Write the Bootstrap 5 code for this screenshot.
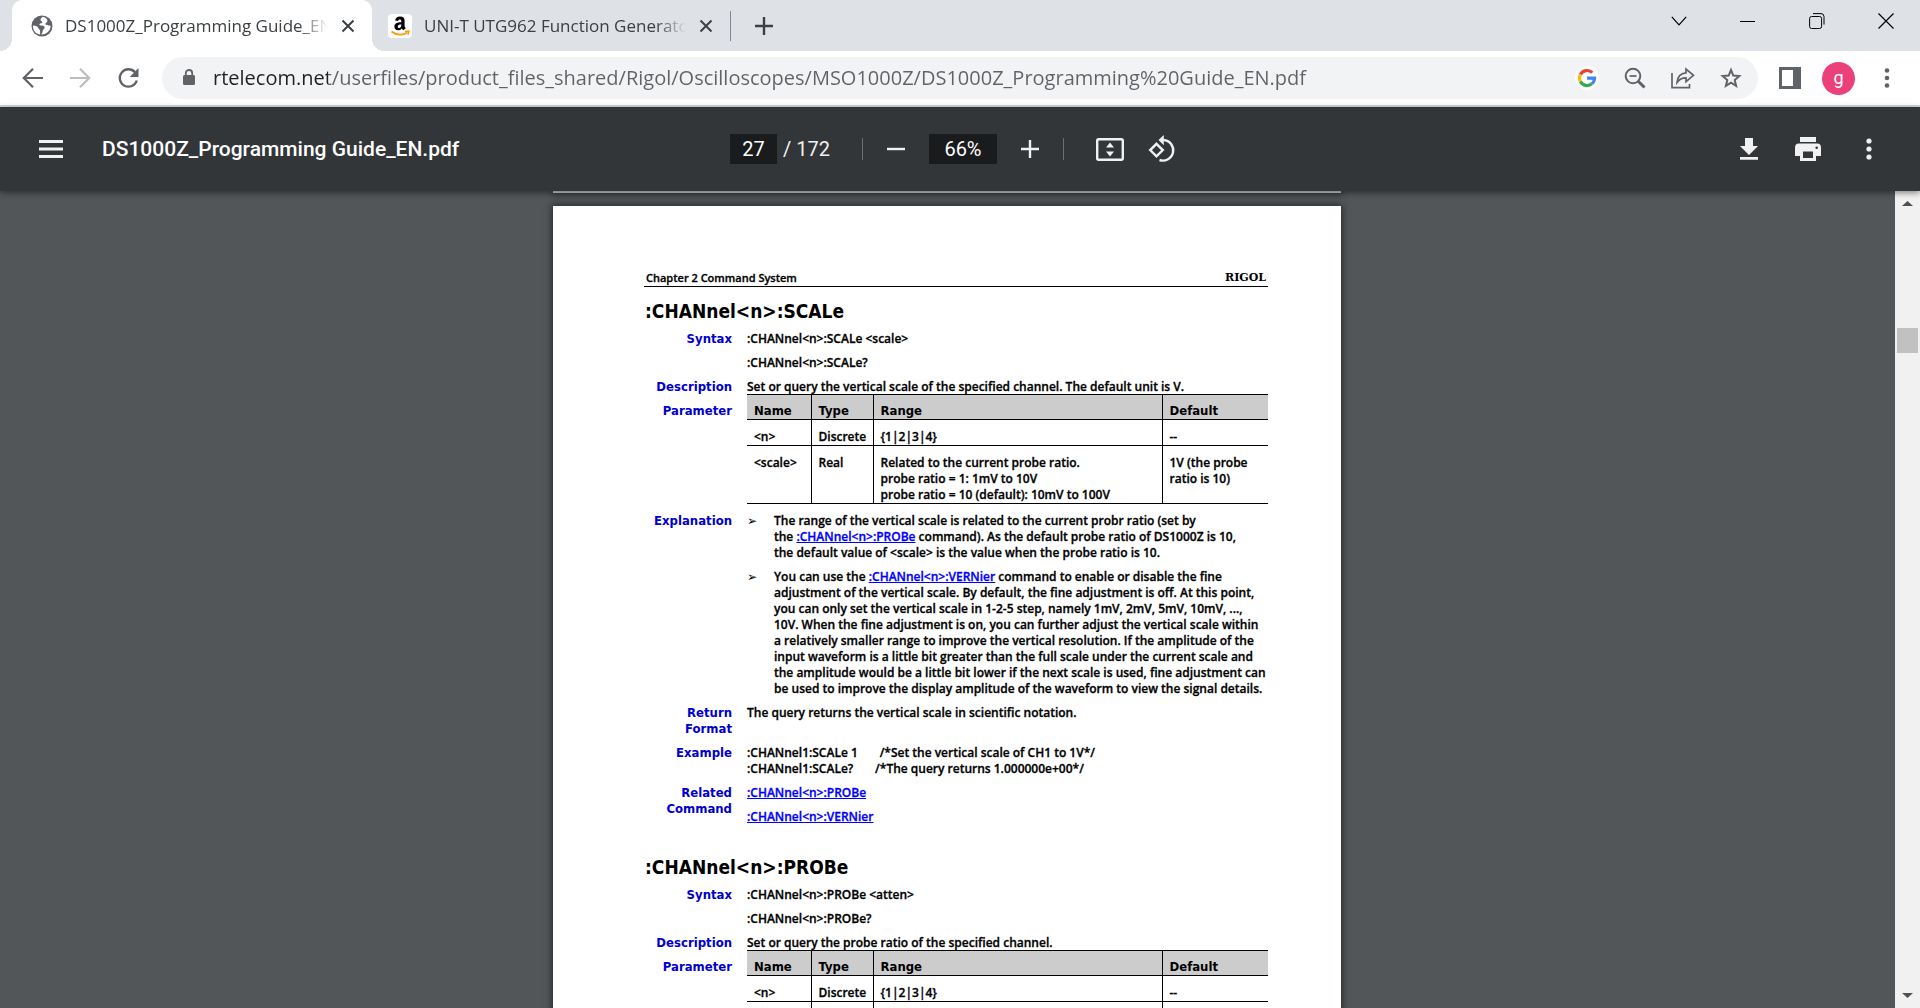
<!DOCTYPE html>
<html lang="en">
<head>
<meta charset="utf-8">
<meta name="viewport" content="width=device-width, initial-scale=1">
<title>DS1000Z_Programming Guide_EN.pdf</title>
<link href="https://cdn.jsdelivr.net/npm/bootstrap@5.3.0/dist/css/bootstrap.min.css" rel="stylesheet">
<style>
  body { height: 100vh; overflow: hidden; font-family: "Open Sans", "Noto Sans", sans-serif; background: #525659; }
  button { border: 0; background: transparent; padding: 0; color: inherit; }
  svg { display: block; flex: none; }

  /* browser chrome */
  .tabstrip { height: 51px; background: #dee1e6; padding-left: 12px; color: #3c4043; }
  .tab-item { position: relative; height: 51px; font-size: 17px; line-height: 24px; }
  .tab-active { width: 360px; background: #fff; border-radius: 10px 10px 0 0; padding: 0 16px 0 19px; }
  .tab-active::before, .tab-active::after { content: ""; position: absolute; bottom: 0; width: 12px; height: 12px; }
  .tab-active::before { left: -12px; background: radial-gradient(circle at 0 0, transparent 12px, #fff 12px); }
  .tab-active::after { right: -12px; background: radial-gradient(circle at 100% 0, transparent 12px, #fff 12px); }
  .tab-idle { width: 359px; padding: 0 16px; border-right: 1px solid #80868b; height: 30px; margin-top: 11px; }
  .tab-label { flex: 1; overflow: hidden; white-space: nowrap; margin: 0 12px; -webkit-mask-image: linear-gradient(90deg, #000 calc(100% - 30px), transparent); mask-image: linear-gradient(90deg, #000 calc(100% - 30px), transparent); }
  .fav { width: 24px; height: 24px; }
  .win-btn { width: 69px; height: 42px; color: #000; }
  .navrow { height: 56px; background: #fff; border-bottom: 2px solid #d5d7da; color: #5f6368; padding: 0 22px 0 20px; }
  .navrow .nav-btn { width: 48px; }
  .nav-tail { display: flex; align-items: center; gap: 21px; margin-left: 21px; }
  .omnibox { height: 42px; border-radius: 21px; background: #f1f3f4; padding: 0 16px 0 19px; margin-left: -2px; }
  .omni-icons { display: flex; align-items: center; gap: 25px; }
  .url-text { flex: 1; min-width: 0; border: 0; outline: 0; padding: 0; margin-left: 16px; font-size: 20px; line-height: 28px; color: transparent; background: linear-gradient(90deg, #202124 115px, #5f6368 115px); -webkit-background-clip: text; background-clip: text; }
  .avatar { width: 33px; height: 33px; border-radius: 50%; background: #ec407a; color: #fff; font: 18px/30px Roboto, sans-serif; text-align: center; }

  /* viewer toolbar */
  .pdfbar { position: relative; z-index: 2; height: 84px; background: #323639; color: #f1f1f1; font: 20px/30px Roboto, sans-serif; box-shadow: 0 2px 6px rgba(0,0,0,.45); padding: 0 40px 0 39px; }
  .pdf-side { flex: 1 1 0; }
  .pdf-title { font-size: 21px; font-weight: 500; color: #fff; margin-left: 39px; }
  .pdf-mid { margin-right: 13px; }
  .pdf-input { height: 30px; border: 0; padding: 0; background: #191b1c; color: #fff; text-align: center; }
  .pdf-page { width: 47px; }
  .pdf-zoom { width: 68px; }
  .pdf-total { margin: 0 8px 0 6px; }
  .pdf-rule { width: 1px; height: 22px; background: #6c6f71; }
  .pdf-actions { gap: 37px; }

  /* document area */
  .canvas { padding-right: 1px; }
  .sheet { width: 788px; background: #fff; box-shadow: 0 0 7px 1px rgba(0,0,0,.55); }
  .sheet-prev { height: 2px; background: #ccc; }
  .sheet-main { margin-top: 13px; padding: 64px 73px 0 91px; }
  .doc { font: 600 12px/16px "Open Sans", "Noto Sans", sans-serif; color: #000; white-space: nowrap; -webkit-text-stroke: .3px; }
  .doc-head { border-bottom: 1px solid #000; padding: 0 2px; font-size: 11px; }
  .doc-brand { font: bold 11px/16px "DejaVu Serif", serif; -webkit-text-stroke: 0; }
  .doc h2 { font: bold 19px/24px "DejaVu Sans Condensed", "DejaVu Sans", sans-serif; -webkit-text-stroke: 0; margin: 12px 0 8px 1px; }
  .doc h2.next { margin-top: 22px; }
  .doc dl { display: grid; grid-template-columns: 88px 1fr; column-gap: 15px; margin: 0; }
  .doc dt { text-align: right; color: #0000cd; font: bold 13px/16px "DejaVu Sans Condensed", "DejaVu Sans", sans-serif; -webkit-text-stroke: 0; }
  .doc dd { margin: 0 0 8px; }
  .doc dd.tight { margin-bottom: 0; }
  .doc dd p { margin: 0 0 8px; }
  .doc dd p:last-child { margin: 0; }
  .doc a { color: #00f; }
  .doc .lab-param { padding-top: 8px; }
  .doc ul { list-style: none; margin: 0; padding: 0; }
  .doc li { position: relative; padding-left: 27px; margin-bottom: 8px; }
  .doc li:last-child { margin: 0; }
  .doc li::before { content: "➢"; position: absolute; left: 0; top: 0; font: 12px/16px "DejaVu Sans", sans-serif; -webkit-text-stroke: 0; }
  .ptable { width: 100%; table-layout: fixed; border-collapse: collapse; border-bottom: 1px solid #000; margin: -1px 0 9px; }
  .ptable th, .ptable td { border: 1px solid #000; border-bottom: 0; padding: 9px 0 0 7px; vertical-align: top; }
  .ptable th { background: #ccc; font: bold 13px/16px "DejaVu Sans Condensed", "DejaVu Sans", sans-serif; -webkit-text-stroke: 0; padding-top: 8px; }
  .ptable tr > :first-child { border-left: 0; }
  .ptable tr > :last-child { border-right: 0; }
  .doc dd.param { margin: 0; }

  .sbar { width: 25px; background: #f1f1f1; }
  .sbar button { height: 25px; width: 25px; color: #505050; }
  .sthumb { width: 21px; height: 25px; margin: 112px auto 0; background: #c1c1c1; }
</style>
<script src="https://cdn.jsdelivr.net/npm/bootstrap@5.3.0/dist/js/bootstrap.bundle.min.js"></script>
</head>
<body class="d-flex flex-column">

<header>
  <div class="tabstrip d-flex">
    <div class="tab-item tab-active d-flex align-items-center flex-shrink-0">
      <svg width="22" height="22" viewBox="0 0 22 22"><circle cx="11" cy="11" r="10.5" fill="#5f6368"/><path d="M11.5 1.7c-.3 1.3-2 1.300-2 3 0 1.500 1.700 1 1.700 2.500 0 1.300-2.800.7-2.800 2.400 0 1.500 3.900.5 5 2.200 1 1.700-.9 2.300-1.500 3.500-.5 1.200-.3 2.700-1.600 4.200 6-.2 9.500-4.600 9.300-9-1.600.7-2.400-.5-4-.5-1.500-.1-1.500-1.700-.3-2.400 1.500-.9 1.500-2.700 0-4.200-1.200-1-2.500-1.600-3.800-1.700zM2 10.500c2.400.2 4.700.5 5.200 2.300.4 1.600 1.900 1.400 1.900 3.200v3.600C4.500 19 1.700 15.300 2 10.500z" fill="#fff"/></svg>
      <span class="tab-label">DS1000Z_Programming Guide_EN.pdf</span>
      <button aria-label="Close tab"><svg width="16" height="16" viewBox="0 0 16 16"><path d="M2.500 2.500l11 11M13.500 2.500l-11 11" stroke="#3c4043" stroke-width="2"/></svg></button>
    </div>
    <div class="tab-item tab-idle d-flex align-items-center flex-shrink-0">
      <svg class="fav" viewBox="0 0 24 24"><rect width="24" height="24" rx="4" fill="#fff"/><path d="M13.300 8.300V7.200c0-1.200-.5-1.800-1.500-1.800-.9 0-1.500.5-1.700 1.500l-3-.3C7.500 4 9.300 2.600 12.200 2.600c2.800 0 4.400 1.400 4.400 4v5.200c0 1 .4 1.500 1.100 2.400l-2.300 2c-.7-.5-1.200-1.100-1.600-1.800-1 1.300-2.200 1.900-3.700 1.900-2.300 0-3.700-1.400-3.700-3.600 0-3.200 2.800-4.400 6.900-4.400zm0 2.100c-2.300 0-3.500.6-3.500 2.100 0 1 .5 1.500 1.300 1.500 1.300 0 2.200-1.100 2.200-3z" fill="#000"/><path d="M3.500 17.500c5 4 11.500 4 16 1" fill="none" stroke="#f90" stroke-width="1.800"/><path d="M17 17.300l4-.3-1 3.800" fill="none" stroke="#f90" stroke-width="1.300"/></svg>
      <span class="tab-label">UNI-T UTG962 Function Generator</span>
      <button aria-label="Close tab"><svg width="16" height="16" viewBox="0 0 16 16"><path d="M2.500 2.500l11 11M13.500 2.500l-11 11" stroke="#3c4043" stroke-width="2"/></svg></button>
    </div>
    <button class="ms-4 align-self-center" aria-label="New tab"><svg width="18" height="18" viewBox="0 0 18 18"><path d="M9 0v18M0 9h18" stroke="#3c4043" stroke-width="2.400"/></svg></button>
    <div class="d-flex ms-auto">
      <button class="win-btn d-flex align-items-center justify-content-center" aria-label="Search tabs"><svg width="16" height="10" viewBox="0 0 16 10"><path d="M.8.8L8 8.800 15.200.8" fill="none" stroke="currentColor" stroke-width="1.200"/></svg></button>
      <button class="win-btn d-flex align-items-center justify-content-center" aria-label="Minimize"><svg width="16" height="16"><path d="M0 8.500h15" stroke="currentColor"/></svg></button>
      <button class="win-btn d-flex align-items-center justify-content-center" aria-label="Restore"><svg width="16" height="16" viewBox="0 0 16 16" fill="none" stroke="currentColor"><rect x=".6" y="3.500" width="12" height="12" rx="2"/><path d="M4 .6h8a3 3 0 0 1 3 3v8"/></svg></button>
      <button class="win-btn d-flex align-items-center justify-content-center" aria-label="Close"><svg width="16" height="16" viewBox="0 0 16 16"><path d="M.5.5l15 15M15.500.5l-15 15" stroke="currentColor" stroke-width="1.200"/></svg></button>
    </div>
  </div>

  <nav class="navrow d-flex align-items-center" aria-label="Browser">
    <button class="nav-btn" aria-label="Back"><svg width="25" height="24" viewBox="0 0 25 24" fill="none" stroke="#5f6368" stroke-width="2.200"><path d="M23 12H4.500M13 2.800L3.800 12l9.200 9.200"/></svg></button>
    <button class="nav-btn" aria-label="Forward"><svg width="25" height="24" viewBox="0 0 25 24" fill="none" stroke="#bbbdbf" stroke-width="2.200"><path d="M2 12h18.500M12 2.800l9.200 9.200-9.200 9.200"/></svg></button>
    <button class="nav-btn" aria-label="Reload"><svg width="25" height="24" viewBox="0 0 25 24" fill="none" stroke="#5f6368" stroke-width="2.300"><path d="M20.800 14.500A8.700 8.700 0 1 1 19 6.200"/><path d="M22.500 2v9h-8.800z" fill="#5f6368" stroke="none"/></svg></button>
    <div class="omnibox d-flex align-items-center flex-grow-1">
      <svg width="16" height="20" viewBox="0 0 16 20"><rect x="2" y="7" width="12" height="10" rx="1.500" fill="#5f6368"/><path d="M4.800 8V5.200a3.200 3.200 0 0 1 6.400 0V8" fill="none" stroke="#5f6368" stroke-width="1.800"/></svg>
      <input class="url-text" type="text" aria-label="Address" value="rtelecom.net/userfiles/product_files_shared/Rigol/Oscilloscopes/MSO1000Z/DS1000Z_Programming%20Guide_EN.pdf">
      <div class="omni-icons">
        <button aria-label="Google"><svg width="24" height="24" viewBox="-12 -12 24 24" fill="none" stroke-width="3.200"><circle r="12" fill="#fff" stroke="none"/><path d="M-6.600-3.500A7.500 7.500 0 0 1 5.300-5.300" stroke="#ea4335"/><path d="M-6.600 3.500A7.500 7.500 0 0 1-6.600-3.500" stroke="#fbbc05"/><path d="M4.800 5.800A7.500 7.500 0 0 1-6.600 3.500" stroke="#34a853"/><path d="M0 .2h7.500A7.500 7.500 0 0 1 4.800 5.800" stroke="#4285f4"/></svg></button>
        <button aria-label="Zoom"><svg width="22" height="22" viewBox="0 0 22 22" fill="none" stroke="#5f6368"><circle cx="9" cy="9" r="7.300" stroke-width="2"/><path d="M14 14l6.500 6.500" stroke-width="3"/><path d="M5.500 9h7" stroke-width="1.700"/></svg></button>
        <button aria-label="Share"><svg width="24" height="22" viewBox="0 0 24 22" fill="none" stroke="#5f6368" stroke-width="1.700"><path d="M1 6v14.700h17.500V17"/><path d="M6 15.500C6.500 9.500 9.500 6.300 15 5.800V2l7.500 6.300-7.500 6.300v-3.800c-4-.1-6.500 1.200-9 4.700z"/></svg></button>
        <button aria-label="Bookmark"><svg width="22" height="22" viewBox="0 0 22 22" fill="none" stroke="#5f6368" stroke-width="2"><path d="M11 3l2.300 5.600 6 .5-4.600 3.900 1.400 5.900-5.100-3.200-5.100 3.200 1.400-5.900L2.700 9.100l6-.5z"/></svg></button>
      </div>
    </div>
    <div class="nav-tail">
      <button aria-label="Side panel"><svg width="22" height="22" viewBox="0 0 22 22"><path d="M0 0h22v22H0zM3 3v16h11V3z" fill="#5f6368" fill-rule="evenodd"/></svg></button>
      <button class="avatar" aria-label="Profile">g</button>
      <button aria-label="Menu"><svg width="22" height="22" viewBox="0 0 22 22" fill="#5f6368"><circle cx="11" cy="3.500" r="2.300"/><circle cx="11" cy="11" r="2.300"/><circle cx="11" cy="18.500" r="2.300"/></svg></button>
    </div>
  </nav>
</header>

<div class="pdfbar d-flex align-items-center flex-shrink-0">
  <div class="pdf-side d-flex align-items-center">
    <button aria-label="Menu"><svg width="24" height="18" viewBox="0 0 24 18"><path d="M0 1.500h24M0 9h24M0 16.500h24" stroke="#f1f1f1" stroke-width="3"/></svg></button>
    <span class="pdf-title">DS1000Z_Programming Guide_EN.pdf</span>
  </div>
  <div class="pdf-mid d-flex align-items-center">
    <input class="pdf-input pdf-page" type="text" value="27" aria-label="Page number">
    <span class="pdf-total">/ 172</span>
    <div class="pdf-rule mx-4"></div>
    <button aria-label="Zoom out"><svg width="18" height="18"><path d="M0 9h18" stroke="#f1f1f1" stroke-width="2.400"/></svg></button>
    <input class="pdf-input pdf-zoom mx-4" type="text" value="66%" aria-label="Zoom level">
    <button aria-label="Zoom in"><svg width="18" height="18"><path d="M0 9h18M9 0v18" stroke="#f1f1f1" stroke-width="2.400"/></svg></button>
    <div class="pdf-rule mx-4"></div>
    <button class="ms-2 me-4" aria-label="Fit to page"><svg width="28" height="23" viewBox="0 0 28 23"><rect x="1.200" y="1.200" width="25.600" height="20.600" rx="1.500" fill="none" stroke="#f1f1f1" stroke-width="2.400"/><path d="M14 4.500l4 5h-8zM14 18.500l-4-5h8z" fill="#f1f1f1"/></svg></button>
    <button aria-label="Rotate"><svg width="28" height="28" viewBox="0 0 28 28" fill="none" stroke="#f1f1f1" stroke-width="2.400"><path d="M8.500 8.800l6.300 6.300-6.300 6.300-6.300-6.300z"/><path d="M15.500 5a10.300 10.300 0 1 1-4 20"/><path d="M15.800 0v10.200L10.500 5z" fill="#f1f1f1" stroke="none"/></svg></button>
  </div>
  <div class="pdf-side pdf-actions d-flex align-items-center justify-content-end">
    <button aria-label="Download"><svg width="18" height="22" viewBox="0 0 18 22" fill="#f1f1f1"><path d="M5 0h8v8h5l-9 9-9-9h5zM0 19h18v2.800H0z"/></svg></button>
    <button aria-label="Print"><svg width="26" height="24" viewBox="0 0 26 24"><path d="M5 0h16v5H5zM4 6.500h18a4 4 0 0 1 4 4V19h-5v5H5v-5H0v-8.500a4 4 0 0 1 4-4zM8 14.500v6.500h10v-6.500z" fill="#f1f1f1" fill-rule="evenodd"/><circle cx="21.700" cy="10.700" r="1.300" fill="#323639"/></svg></button>
    <button aria-label="More actions"><svg width="22" height="22" viewBox="0 0 22 22" fill="#f1f1f1"><circle cx="11" cy="3" r="2.600"/><circle cx="11" cy="11" r="2.600"/><circle cx="11" cy="19" r="2.600"/></svg></button>
  </div>
</div>

<main class="d-flex flex-grow-1 overflow-hidden">
  <div class="canvas flex-grow-1 d-flex flex-column align-items-center overflow-hidden">
    <div class="sheet sheet-prev flex-shrink-0"></div>
    <article class="sheet sheet-main doc flex-shrink-0">
      <div class="doc-head d-flex justify-content-between"><span>Chapter 2 Command System</span><span class="doc-brand">RIGOL</span></div>

      <h2>:CHANnel&lt;n&gt;:SCALe</h2>
      <dl>
        <dt>Syntax</dt>
        <dd><p>:CHANnel&lt;n&gt;:SCALe &lt;scale&gt;</p><p>:CHANnel&lt;n&gt;:SCALe?</p></dd>
        <dt>Description</dt>
        <dd class="tight">Set or query the vertical scale of the specified channel. The default unit is V.</dd>
        <dt class="lab-param">Parameter</dt>
        <dd class="param">
          <table class="ptable">
            <colgroup><col style="width:64px"><col style="width:62px"><col style="width:289px"><col></colgroup>
            <thead><tr><th>Name</th><th>Type</th><th>Range</th><th>Default</th></tr></thead>
            <tbody>
              <tr><td>&lt;n&gt;</td><td>Discrete</td><td>{1|2|3|4}</td><td>--</td></tr>
              <tr><td>&lt;scale&gt;</td><td>Real</td><td>Related to the current probe ratio.<br>probe ratio = 1: 1mV to 10V<br>probe ratio = 10 (default): 10mV to 100V</td><td>1V (the probe<br>ratio is 10)</td></tr>
            </tbody>
          </table>
        </dd>
        <dt>Explanation</dt>
        <dd>
          <ul>
            <li>The range of the vertical scale is related to the current probr ratio (set by<br>the <a href="#probe">:CHANnel&lt;n&gt;:PROBe</a> command). As the default probe ratio of DS1000Z is 10,<br>the default value of &lt;scale&gt; is the value when the probe ratio is 10.</li>
            <li>You can use the <a href="#vernier">:CHANnel&lt;n&gt;:VERNier</a> command to enable or disable the fine<br>adjustment of the vertical scale. By default, the fine adjustment is off. At this point,<br>you can only set the vertical scale in 1-2-5 step, namely 1mV, 2mV, 5mV, 10mV, ...,<br>10V. When the fine adjustment is on, you can further adjust the vertical scale within<br>a relatively smaller range to improve the vertical resolution. If the amplitude of the<br>input waveform is a little bit greater than the full scale under the current scale and<br>the amplitude would be a little bit lower if the next scale is used, fine adjustment can<br>be used to improve the display amplitude of the waveform to view the signal details.</li>
          </ul>
        </dd>
        <dt>Return<br>Format</dt>
        <dd>The query returns the vertical scale in scientific notation.</dd>
        <dt class="pt-2">Example</dt>
        <dd class="pt-2">:CHANnel1:SCALe 1 &nbsp; &nbsp; &nbsp; /*Set the vertical scale of CH1 to 1V*/<br>:CHANnel1:SCALe? &nbsp; &nbsp; &nbsp; /*The query returns 1.000000e+00*/</dd>
        <dt>Related<br>Command</dt>
        <dd><p><a href="#probe">:CHANnel&lt;n&gt;:PROBe</a></p><p><a href="#vernier">:CHANnel&lt;n&gt;:VERNier</a></p></dd>
      </dl>

      <h2 class="next" id="probe">:CHANnel&lt;n&gt;:PROBe</h2>
      <dl>
        <dt>Syntax</dt>
        <dd><p>:CHANnel&lt;n&gt;:PROBe &lt;atten&gt;</p><p>:CHANnel&lt;n&gt;:PROBe?</p></dd>
        <dt>Description</dt>
        <dd class="tight">Set or query the probe ratio of the specified channel.</dd>
        <dt class="lab-param">Parameter</dt>
        <dd class="param">
          <table class="ptable">
            <colgroup><col style="width:64px"><col style="width:62px"><col style="width:289px"><col></colgroup>
            <thead><tr><th>Name</th><th>Type</th><th>Range</th><th>Default</th></tr></thead>
            <tbody>
              <tr><td>&lt;n&gt;</td><td>Discrete</td><td>{1|2|3|4}</td><td>--</td></tr>
              <tr><td>&nbsp;</td><td></td><td></td><td></td></tr>
            </tbody>
          </table>
        </dd>
      </dl>
    </article>
  </div>
  <div class="sbar d-flex flex-column flex-shrink-0">
    <button class="d-flex align-items-center justify-content-center" aria-label="Scroll up"><svg width="11" height="5" viewBox="0 0 11 5"><path d="M0 5L5.500 0 11 5z" fill="currentColor"/></svg></button>
    <div class="sthumb"></div>
    <button class="d-flex align-items-center justify-content-center mt-auto" aria-label="Scroll down"><svg width="11" height="5" viewBox="0 0 11 5"><path d="M0 0l5.500 5L11 0z" fill="currentColor"/></svg></button>
  </div>
</main>
</body>
</html>
